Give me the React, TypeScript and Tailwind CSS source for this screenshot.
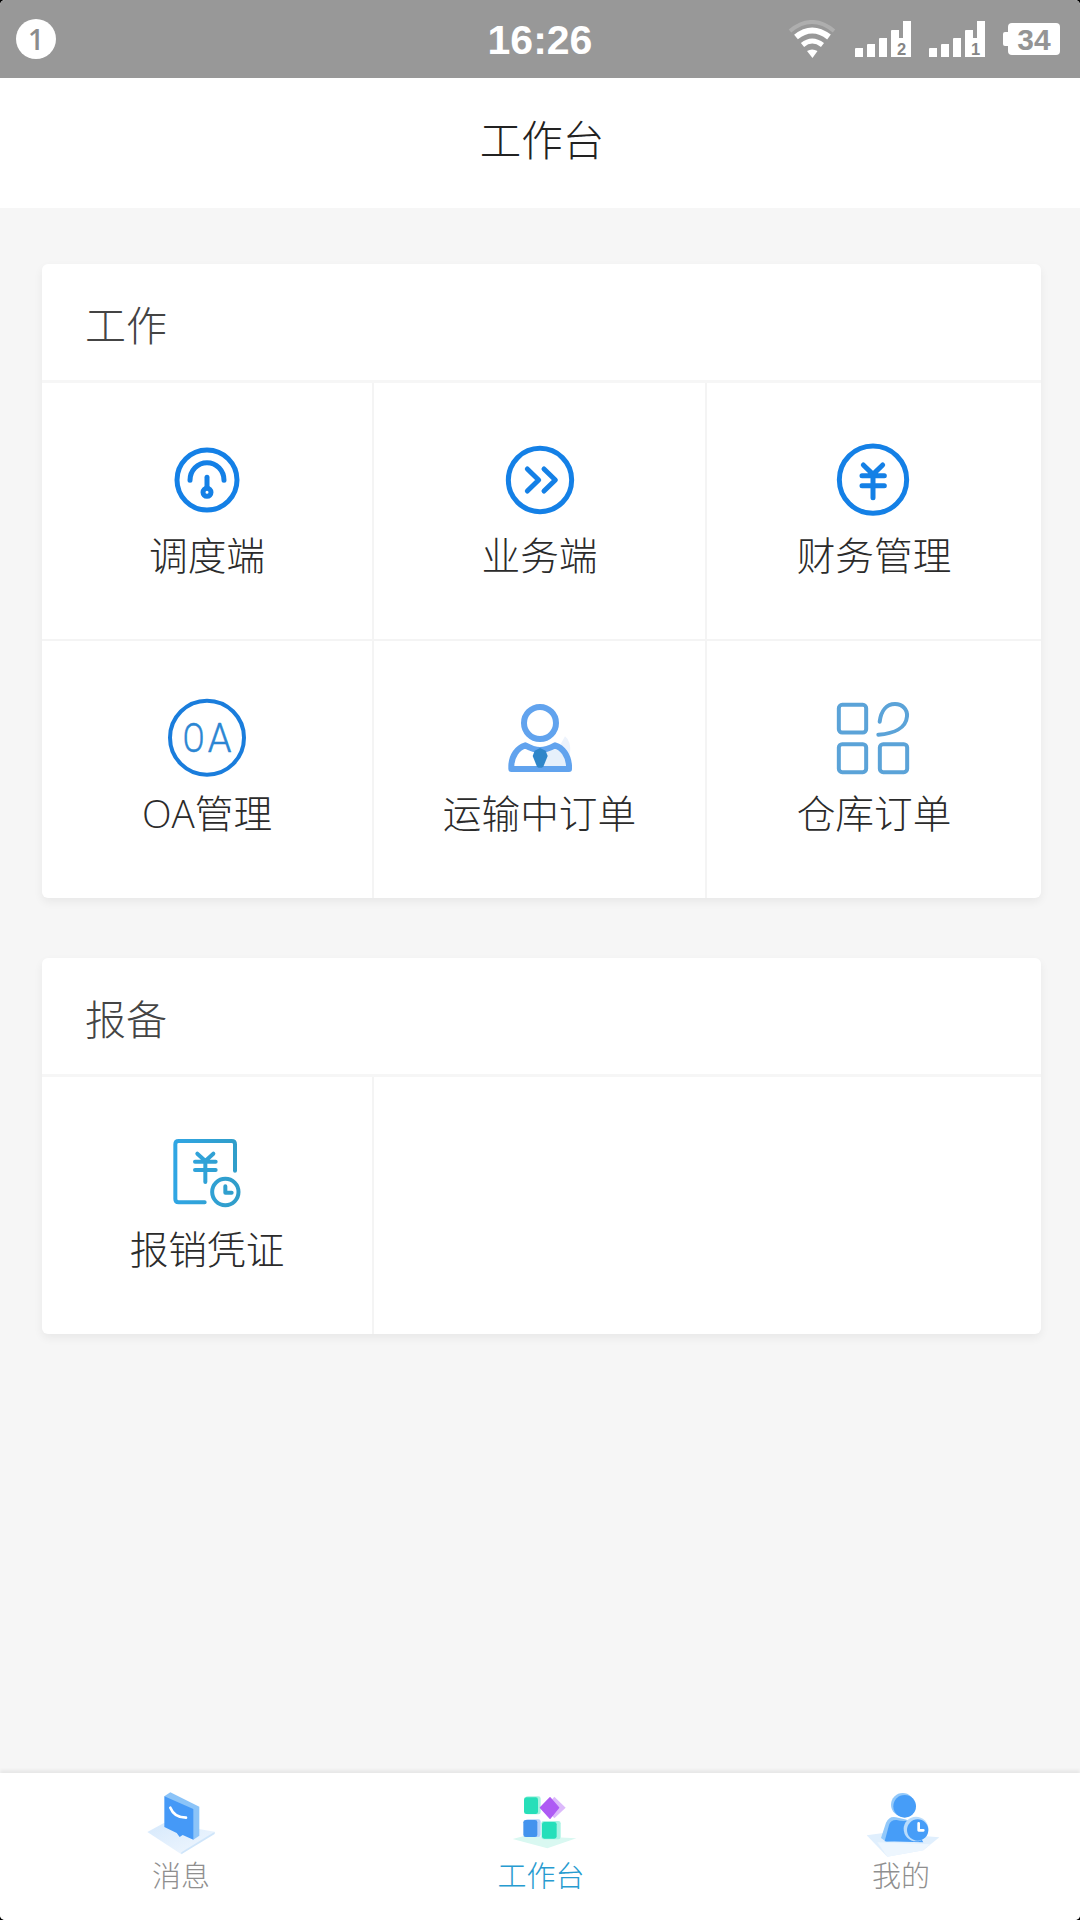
import type { ReactNode } from 'react';

const BLUE = '#1480e6';

function Icon({ children }: { children: ReactNode }) {
  return (
    <svg className="h-20 w-20 shrink-0" viewBox="0 0 240 240" fill="none" strokeLinecap="round" strokeLinejoin="round">
      {children}
    </svg>
  );
}

const GaugeIcon = () => (
  <Icon>
    <g stroke={BLUE} strokeWidth="15">
      <circle cx="120" cy="120" r="90" />
      <path d="M69 121A51 53 0 0 1 171 121" />
      <path d="M120 112V142" />
      <circle cx="120" cy="157" r="12" />
    </g>
  </Icon>
);

const ForwardIcon = () => (
  <Icon>
    <g stroke={BLUE} strokeWidth="15">
      <circle cx="120" cy="120" r="95" />
      <path d="M82 87L116 120L82 153M132 87L166 120L132 153" />
    </g>
  </Icon>
);

const YenIcon = () => (
  <Icon>
    <g stroke={BLUE} strokeWidth="15">
      <circle cx="117" cy="119" r="101" />
      <path d="M88 75L117 103L146 75M84 107H151M84 137H151M117 103V173" />
    </g>
  </Icon>
);

const OaIcon = () => (
  <Icon>
    <circle cx="120" cy="119" r="111" stroke="#1a7ddc" strokeWidth="12" />
    <g fill="#2b86d3" stroke="#2b86d3" strokeWidth="1.500" fontFamily="Roboto, sans-serif" fontWeight="300" fontSize="120">
      <text x="47" y="163" textLength="65" lengthAdjust="spacingAndGlyphs">O</text>
      <text x="122" y="163" textLength="71" lengthAdjust="spacingAndGlyphs">A</text>
    </g>
  </Icon>
);

const PersonIcon = () => (
  <Icon>
    <path d="M120 160L166 141C195 150 208 180 207 213L120 213Z" fill="#e6f0fb" />
    <path d="M195 115q20 15 15 55l-30-28z" fill="#edf3fc" />
    <circle cx="120" cy="75" r="48" stroke="#61a3ee" strokeWidth="18" />
    <path
      d="M34 213H207V203C205 172 188 149 165 142C150 150 138 156 120 156C102 156 92 151 76 142C52 149 35 174 34 203Z"
      stroke="#61a3ee"
      strokeWidth="18"
    />
    <path d="M120 150L137 158L143 174L130 206Q120 213 111 206L98 174L104 158Z" fill="#2f86c9" />
  </Icon>
);

const WarehouseIcon = () => (
  <Icon>
    <g stroke="#5ba3d8" strokeWidth="12">
      <rect x="14.500" y="20.500" width="82" height="83" rx="10" />
      <rect x="14.500" y="138.500" width="82" height="84" rx="10" />
      <rect x="137.500" y="138.500" width="82" height="84" rx="10" />
      <path d="M137 71C141 38 158 18 183 18C205 18 221 34 219 55C216 91 178 107 133 110" />
    </g>
  </Icon>
);

const ReceiptIcon = () => (
  <Icon>
    <defs>
      <linearGradient id="receipt" gradientUnits="userSpaceOnUse" x1="20" y1="120" x2="220" y2="120">
        <stop stopColor="#30a6e4" />
        <stop offset="1" stopColor="#309dc8" />
      </linearGradient>
    </defs>
    <g stroke="url(#receipt)" strokeWidth="12">
      <path d="M204 110V31Q204 21 194 21H35Q25 21 25 31V195Q25 205 35 205H113" />
      <path d="M91 59L115 81L139 59M84 83H146M84 108H146M115 81V144" />
      <circle cx="175" cy="174" r="39.500" />
      <path d="M175 157V176H194" />
    </g>
  </Icon>
);

const MessageIcon = () => (
  <Icon>
    <defs>
      <linearGradient id="messageBase" x1="0" y1="0" x2="1" y2="1">
        <stop stopColor="#d6e9fc" />
        <stop offset="1" stopColor="#f1f7fe" />
      </linearGradient>
    </defs>
    <path d="M22 147L72 120L224 146L124 214Z" fill="url(#messageBase)" />
    <path d="M224 146L124 208V214L224 153Z" fill="#cfe5fa" />
    <path d="M73 40L91 28L178 71V158L160 170Z" fill="#8cc4f8" />
    <path d="M73 40L160 78V170L128 156L119 162L110 150L73 132Z" fill="#4599f7" />
    <path d="M91 74Q103 104 138 104" stroke="#fff" strokeWidth="8" />
  </Icon>
);

const WorkbenchIcon = () => (
  <Icon>
    <path d="M38 168L75 158L229 166L142 196Z" fill="#d9f8f1" />
    <rect x="76" y="40" width="46" height="54" rx="7" fill="#a8f3e0" />
    <path d="M163 41L197 74L163 106L134 74Z" fill="#dcb9fb" />
    <rect x="76" y="109" width="46" height="53" rx="7" fill="#b7d3fb" />
    <rect x="124" y="114" width="58" height="55" rx="7" fill="#a8f3e3" />
    <rect x="72" y="43" width="42" height="50" rx="7" fill="#27dfb9" />
    <rect x="70" y="111" width="42" height="51" rx="7" fill="#4393ee" />
    <rect x="126" y="117" width="44" height="50" rx="7" fill="#25dfba" />
    <path d="M150 44L176 74L150 106L121 74Z" fill="#ae5bf4" stroke="#ae5bf4" strokeWidth="4" />
  </Icon>
);

const ProfileIcon = () => (
  <Icon>
    <path d="M20 157L70 150L238 163L190 202L82 221Z" fill="#e0effd" />
    <path d="M52 178L210 184L190 202L82 221Z" fill="#edf6fe" />
    <circle cx="128" cy="65" r="35" fill="#93c9fa" />
    <path d="M63 165L78 119Q88 98 108 103L140 110L150 168L80 177Z" fill="#93c9fa" />
    <circle cx="134" cy="70" r="34" fill="#469df8" />
    <path d="M74 175L87 126Q92 110 110 111Q132 118 150 110L190 178Z" fill="#469df8" />
    <circle cx="168" cy="138" r="37" fill="#b9dcfc" />
    <circle cx="173" cy="141" r="32" fill="#469df8" />
    <path d="M176 121V142H190" stroke="#fff" strokeWidth="8" />
  </Icon>
);

function Tile({ icon, label }: { icon: ReactNode; label: string }) {
  return (
    <div className="flex h-full flex-col items-center pt-[57px]">
      {icon}
      <span className="mt-[7px] text-[38.700px] leading-[56px] text-[#2b2b2b]">{label}</span>
    </div>
  );
}

function Card({ title, className, children }: { title: string; className: string; children: ReactNode }) {
  return (
    <section className={`ml-[42px] mr-[39px] rounded-[6px] bg-white shadow-[0_4px_10px_rgba(0,0,0,0.06)] ${className}`}>
      <h2 className="flex h-[119px] items-center border-b-[3px] border-[#f6f6f6] pl-[43px] pt-2 text-[41px] text-[#444444]">
        {title}
      </h2>
      {children}
    </section>
  );
}

function Signal({ sim }: { sim: string }) {
  return (
    <svg className="h-9 w-14" viewBox="0 0 56 36" fill="#fff">
      <path d="M0 28q0-1 1-1h7v9H0zM12 24q0-1 1-1h7v13h-8zM24 18q0-1 1-1h7v19h-8zM36 10q0-1 1-1h7v8h4V0h8v36H36z" />
      <text x="46.500" y="33.500" textAnchor="middle" fontFamily="Liberation Sans, sans-serif" fontWeight="700" fontSize="16.500" fill="#858585">
        {sim}
      </text>
    </svg>
  );
}

function StatusBar() {
  return (
    <header className="grid h-[78px] grid-cols-3 items-center bg-[#989898] pl-4 pr-5 font-['Liberation_Sans',sans-serif]">
      <span className="flex h-10 w-10 items-center justify-center rounded-full bg-white font-['Open_Sans',sans-serif] text-[28px] font-semibold leading-none text-[#8c8c8c]">
        1
      </span>
      <time className="pl-1 pt-[3px] text-center text-[41px] font-bold leading-none text-white">16:26</time>
      <div className="flex items-center justify-end">
        <svg className="mr-[19px] h-[38px] w-[48px]" viewBox="0 0 48 38" fill="none">
          <path d="M2 11Q24-7 46 11" stroke="#aeaeae" strokeWidth="4" />
          <path d="M8 17Q24 4 41 17" stroke="#fff" strokeWidth="6" />
          <path d="M14.500 25Q24 17 34.500 25" stroke="#fff" strokeWidth="5" />
          <path d="M19 31Q24 28 29.500 31L24.500 38Z" fill="#fff" />
        </svg>
        <Signal sim="2" />
        <span className="ml-[18px] flex">
          <Signal sim="1" />
        </span>
        <div className="ml-[18px] flex items-center">
          <span className="h-3.5 w-[5px] rounded-l-[2px] bg-white" />
          <span className="flex h-8 w-[52px] items-center justify-center rounded-[4px] bg-white pt-0.5 text-[30px] font-bold leading-none text-[#949494]">
            34
          </span>
        </div>
      </div>
    </header>
  );
}

const workTiles = [
  { label: '调度端', icon: <GaugeIcon /> },
  { label: '业务端', icon: <ForwardIcon /> },
  { label: '财务管理', icon: <YenIcon /> },
  { label: 'OA管理', icon: <OaIcon /> },
  { label: '运输中订单', icon: <PersonIcon /> },
  { label: '仓库订单', icon: <WarehouseIcon /> },
];

const tabs = [
  { label: '消息', icon: <MessageIcon />, color: 'text-[#8f8f8f]' },
  { label: '工作台', icon: <WorkbenchIcon />, color: 'text-[#279bd0]' },
  { label: '我的', icon: <ProfileIcon />, color: 'text-[#8f8f8f]' },
];

export default function App() {
  return (
    <div className="h-[1920px] w-[1080px] bg-black">
      <div className="flex h-full flex-col overflow-hidden rounded-[5px] bg-[#f6f6f6] font-['Open_Sans','Noto_Sans_CJK_SC',sans-serif] font-light">
        <StatusBar />
        <h1 className="flex h-[130px] items-center justify-center bg-white pb-[5px] pl-1 text-[41.500px] text-[#222222]">
          工作台
        </h1>
        <main className="flex-1 pt-[56px]">
          <Card title="工作" className="h-[634px]">
            <div className="grid grid-cols-[332px_333px_1fr] grid-rows-[258px_257px]">
              {workTiles.map((tile, i) => (
                <div
                  key={tile.label}
                  className={`${i % 3 < 2 ? 'border-r-2 border-[#f4f4f4]' : ''} ${i < 3 ? 'border-b-2 border-b-[#f4f4f4]' : ''}`}
                >
                  <Tile {...tile} />
                </div>
              ))}
            </div>
          </Card>
          <Card title="报备" className="mt-[60px] h-[376px]">
            <div className="h-[257px] w-[332px] border-r-2 border-[#f4f4f4]">
              <Tile label="报销凭证" icon={<ReceiptIcon />} />
            </div>
          </Card>
        </main>
        <nav className="grid h-[147px] grid-cols-3 bg-white shadow-[0_-3px_3px_rgba(0,0,0,0.06)]">
          {tabs.map((tab) => (
            <div key={tab.label} className={`flex flex-col items-center pt-2.5 ${tab.color}`}>
              <span className="flex pr-px">{tab.icon}</span>
              <span className="-mt-[5px] pl-0.5 text-[29px] leading-[36px]">{tab.label}</span>
            </div>
          ))}
        </nav>
      </div>
    </div>
  );
}
